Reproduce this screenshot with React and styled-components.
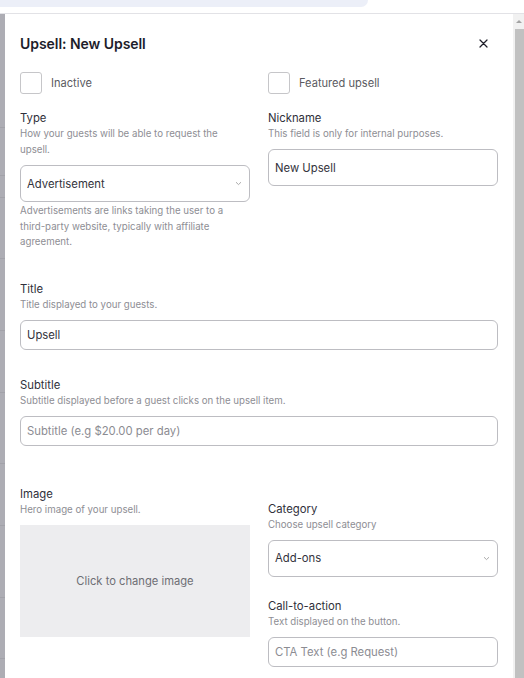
import styled, { createGlobalStyle } from "styled-components";

const GlobalStyle = createGlobalStyle`
  * { box-sizing: border-box; }
  html, body { margin: 0; padding: 0; background: #ffffff; }
  body {
    font-family: Inter, "Noto Sans", "Liberation Sans", sans-serif;
    overflow: hidden;
  }
`;

const Chevron = () => (
  <svg width="7" height="5" viewBox="0 0 7 5">
    <path d="M1 1.2 L3.5 3.6 L6 1.2" fill="none" stroke="#a0a0a0" strokeWidth="0.9" />
  </svg>
);

const CloseIcon = () => (
  <svg width="9" height="9" viewBox="0 0 9 9">
    <path d="M1 1 L8 8 M8 1 L1 8" stroke="#1f1f2a" strokeWidth="1.25" strokeLinecap="round" />
  </svg>
);

const App = () => {
  return (
    <>
      <GlobalStyle />
      <Page>
        <TopStrip>
          <TopPill />
        </TopStrip>
        <Body>
          <Backdrop>
            {[113, 161, 183, 244, 316, 378, 449, 511, 583, 644].map((y) => (
              <BackdropLine key={y} style={{ top: y }} />
            ))}
          </Backdrop>
          <Modal>
            <Header>
              <Heading>Upsell: New Upsell</Heading>
              <CloseButton>
                <CloseIcon />
              </CloseButton>
            </Header>

            <Grid>
              <CheckRow>
                <Box />
                <CheckLabel>Inactive</CheckLabel>
              </CheckRow>
              <CheckRow>
                <Box />
                <CheckLabel>Featured upsell</CheckLabel>
              </CheckRow>
            </Grid>

            <Grid top={16}>
              <Field>
                <Label>Type</Label>
                <Desc>How your guests will be able to request the upsell.</Desc>
                <SelectBox>
                  <span>Advertisement</span>
                  <Chevron />
                </SelectBox>
                <Help>
                  Advertisements are links taking the user to a third-party
                  website, typically with affiliate agreement.
                </Help>
              </Field>
              <Field>
                <Label>Nickname</Label>
                <Desc>This field is only for internal purposes.</Desc>
                <Input tall defaultValue="New Upsell" />
              </Field>
            </Grid>

            <Field top={31}>
              <Label>Title</Label>
              <Desc>Title displayed to your guests.</Desc>
              <Input defaultValue="Upsell" />
            </Field>

            <Field top={27}>
              <Label>Subtitle</Label>
              <Desc>Subtitle displayed before a guest clicks on the upsell item.</Desc>
              <Input placeholder="Subtitle (e.g $20.00 per day)" />
            </Field>

            <Grid top={40}>
              <Field>
                <Label>Image</Label>
                <Desc>Hero image of your upsell.</Desc>
                <ImageDrop>Click to change image</ImageDrop>
              </Field>
              <Field top={15}>
                <Label>Category</Label>
                <Desc>Choose upsell category</Desc>
                <SelectBox>
                  <span>Add-ons</span>
                  <Chevron />
                </SelectBox>
                <SubField>
                  <Label>Call-to-action</Label>
                  <Desc>Text displayed on the button.</Desc>
                  <Input placeholder="CTA Text (e.g Request)" />
                </SubField>
              </Field>
            </Grid>
          </Modal>
          <Scrollbar>
            <ScrollArrow />
            <ScrollThumb />
          </Scrollbar>
        </Body>
      </Page>
    </>
  );
};

export default App;

const Page = styled.div`
  width: 524px;
  height: 678px;
  display: flex;
  flex-direction: column;
  overflow: hidden;
`;

const TopStrip = styled.div`
  height: 14px;
  flex-shrink: 0;
  background: #ffffff;
  border-bottom: 1px solid #e2e2e6;
`;

const TopPill = styled.div`
  width: 368px;
  height: 7px;
  background: #eceff8;
  border-bottom-right-radius: 10px;
`;

const Body = styled.div`
  flex: 1;
  display: flex;
  min-height: 0;
`;

const Backdrop = styled.div`
  position: relative;
  width: 5px;
  flex-shrink: 0;
  background: #adadb4;
`;

const BackdropLine = styled.div`
  position: absolute;
  left: 0;
  width: 5px;
  height: 1px;
  background: #a2a2a9;
`;

const Modal = styled.div`
  flex: 1;
  background: #ffffff;
  padding: 0 15px;
  display: flex;
  flex-direction: column;
`;

const Header = styled.div`
  display: flex;
  align-items: center;
  justify-content: space-between;
  height: 58px;
`;

const Heading = styled.h2`
  margin: 0;
  font-size: 14px;
  font-weight: 600;
  color: #1d1d2b;
  letter-spacing: -0.05px;
`;

const CloseButton = styled.div`
  width: 12px;
  height: 12px;
  margin-right: 9px;
  display: flex;
  align-items: center;
  justify-content: center;
`;

const Grid = styled.div`
  display: grid;
  grid-template-columns: 1fr 1fr;
  column-gap: 18px;
  align-items: start;
  margin-top: ${(p) => (p.top ? `${p.top}px` : 0)};
`;

const CheckRow = styled.label`
  display: flex;
  align-items: center;
  gap: 9px;
  height: 22px;
`;

const Box = styled.span`
  width: 22px;
  height: 22px;
  border: 1px solid #c6c6c9;
  border-radius: 3px;
  background: #fff;
`;

const CheckLabel = styled.span`
  font-size: 11.1px;
  color: #5a5a61;
`;

const Field = styled.div`
  display: flex;
  flex-direction: column;
  margin-top: ${(p) => (p.top ? `${p.top}px` : 0)};
`;

const SubField = styled.div`
  display: flex;
  flex-direction: column;
  margin-top: 19px;
`;

const Label = styled.div`
  font-size: 11.3px;
  line-height: 16px;
  color: #30303a;
`;

const Desc = styled.div`
  font-size: 9.7px;
  line-height: 16px;
  color: #8e8e94;
  margin-bottom: 7px;
`;

const Help = styled.div`
  font-size: 9.7px;
  line-height: 15.5px;
  color: #8e8e94;
  margin-top: -1px;
`;

const SelectBox = styled.div`
  height: 37px;
  border: 1px solid #bdbdc2;
  border-radius: 6px;
  padding: 0 7px 0 6px;
  display: flex;
  align-items: center;
  justify-content: space-between;
  font-size: 11.3px;
  color: #33333c;
  margin-bottom: 2px;
`;

const Input = styled.input`
  height: ${(p) => (p.tall ? "37px" : "30px")};
  width: 100%;
  border: 1px solid #bdbdc2;
  border-radius: 6px;
  padding: 0 6px;
  font-family: inherit;
  font-size: 11.3px;
  color: #33333c;
  outline: none;
  background: #fff;

  &::placeholder {
    color: #8c8c92;
  }
`;

const ImageDrop = styled.div`
  height: 112px;
  background: #ededef;
  display: flex;
  align-items: center;
  justify-content: center;
  font-size: 11.2px;
  color: #6e6e74;
`;

const Scrollbar = styled.div`
  width: 11px;
  flex-shrink: 0;
  background: #f1f1f1;
  display: flex;
  flex-direction: column;
  align-items: flex-end;
`;

const ScrollArrow = styled.div`
  width: 0;
  height: 0;
  margin: 6px 2px 6px 0;
  border-left: 3px solid transparent;
  border-right: 3px solid transparent;
  border-bottom: 3px solid #a3a3a3;
`;

const ScrollThumb = styled.div`
  width: 9px;
  flex: 1;
  background: #c1c1c1;
`;
